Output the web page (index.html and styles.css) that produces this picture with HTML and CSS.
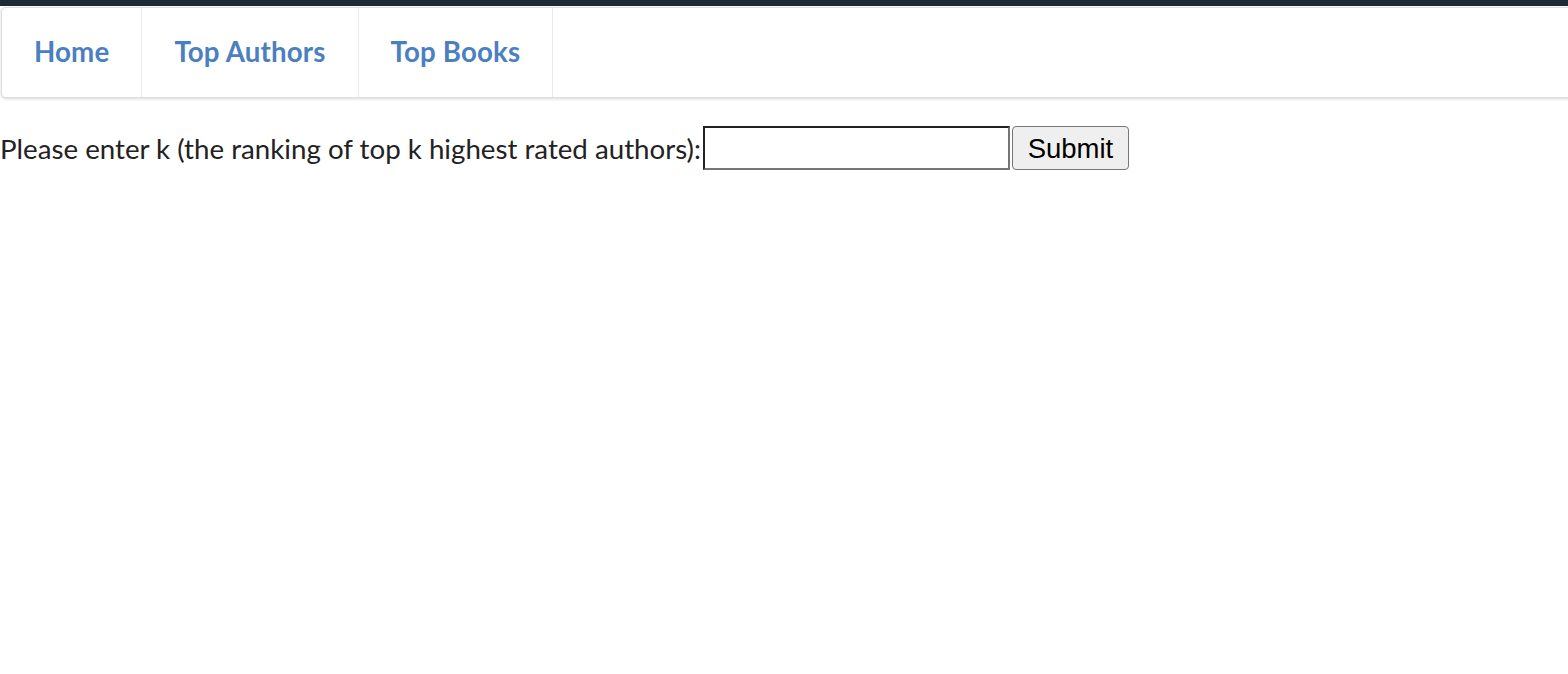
FILE: index.html
```html
<!DOCTYPE html>
<html>
<head>
<meta charset="utf-8">
<link rel="stylesheet" href="styles.css">
</head>
<body>
<div class="topbar"></div>
<nav class="menu">
  <a class="item" href="#">Home</a>
  <a class="item" href="#">Top Authors</a>
  <a class="item" href="#">Top Books</a>
</nav>
<form class="form">
  <label class="label">Please enter k (the ranking of top k highest rated authors):</label><input class="input" type="text"><button class="btn" type="button">Submit</button>
</form>
</body>
</html>
```
FILE: styles.css
```css
html, body {
  margin: 0;
  padding: 0;
  background: #fff;
  overflow: hidden;
}
body {
  font-family: Lato, "Helvetica Neue", Arial, sans-serif;
  color: #222;
}
.topbar {
  height: 6px;
  background: #1c2a33;
}
.menu {
  display: flex;
  margin: 1px -20px 0 1px;
  height: 89px;
  border: 1px solid rgba(34, 36, 38, 0.15);
  border-radius: 5px;
  box-shadow: 0 1px 3px 0 rgba(34, 36, 38, 0.18);
  background: #fff;
}
.item {
  display: flex;
  align-items: center;
  padding: 0 32px 3px 32px;
  border-right: 1px solid rgba(34, 36, 38, 0.1);
  color: #4b7fc1;
  font-weight: 700;
  font-size: 27.7px;
  letter-spacing: 0.15px;
  text-decoration: none;
}
.form {
  display: flex;
  align-items: center;
  margin-top: 28px;
}
.label {
  font-size: 27.7px;
  color: #222;
  margin-right: 2px;
}
.input {
  box-sizing: border-box;
  width: 307px;
  height: 44px;
  margin: 0 2px 0 0;
  border-style: solid;
  border-width: 2px;
  border-color: #222 #767676 #767676 #222;
  padding: 0;
  background: #fff;
}
.btn {
  box-sizing: border-box;
  width: 117px;
  height: 44px;
  margin: 0;
  border: 1px solid #767676;
  border-radius: 4px;
  background: #efefef;
  font-family: "Liberation Sans", Arial, sans-serif;
  font-size: 27.5px;
  color: #000;
  padding: 2px 0 0 0;
}
```
